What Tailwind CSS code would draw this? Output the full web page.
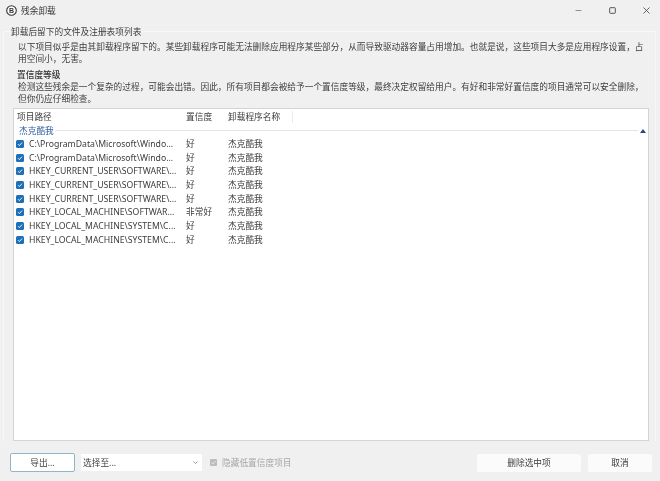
<!DOCTYPE html>
<html lang="zh-CN">
<head>
	<meta charset="UTF-8">
	<title>残余卸载</title>
	<script src="https://cdn.jsdelivr.net/npm/@tailwindcss/browser@4"></script>
</head>
<body class="w-[660px] h-[481px] overflow-hidden bg-[#f0f0f0] text-[#3c3c3c] text-[8.7px] leading-[12px] font-['Noto_Sans','Noto_Sans_CJK_SC',sans-serif] blur-[0.35px]">
	<!-- Title bar -->
	<header class="h-[20px] flex items-center pl-[6px] pr-[10px]">
		<svg width="11" height="11" viewBox="0 0 11 11" class="shrink-0">
			<circle cx="5.5" cy="5.5" r="4.8" fill="#fff" stroke="#333" stroke-width="1.1"/>
			<text x="5.5" y="8" text-anchor="middle" font-size="7" font-weight="700" font-family="Liberation Sans" fill="#333">B</text>
		</svg>
		<span class="ml-[4px] pt-[1px] text-[#333]">残余卸载</span>
		<div class="ml-auto flex items-center gap-[27px]">
			<svg width="7" height="7" viewBox="0 0 7 7"><path d="M0.5 3.5H6.5" stroke="#777" stroke-width="0.8"/></svg>
			<svg width="7" height="7" viewBox="0 0 7 7"><rect x="0.7" y="0.7" width="5.6" height="5.6" rx="0.6" fill="none" stroke="#444" stroke-width="0.9"/></svg>
			<svg width="7" height="7" viewBox="0 0 7 7"><path d="M0.5 0.5L6.5 6.5M6.5 0.5L0.5 6.5" stroke="#444" stroke-width="0.8"/></svg>
		</div>
	</header>

	<main class="mt-[11px] ml-[3px] mr-[4px] border-t border-l border-r border-[#f7f7f7]">
		<h2 class="-mt-[6px] mb-[3px] ml-[7px] w-fit bg-[#f0f0f0]">卸载后留下的文件及注册表项列表</h2>
		<div class="pl-[14px] whitespace-nowrap">
			<p>以下项目似乎是由其卸载程序留下的。某些卸载程序可能无法删除应用程序某些部分，从而导致驱动器容量占用增加。也就是说，这些项目大多是应用程序设置，占<br>用空间小，无害。</p>
			<h3 class="mt-[4px] font-medium text-[#333] -ml-[1px]">置信度等级</h3>
			<p>检测这些残余是一个复杂的过程，可能会出错。因此，所有项目都会被给予一个置信度等级，最终决定权留给用户。有好和非常好置信度的项目通常可以安全删除，<br>但你仍应仔细检查。</p>
		</div>

		<!-- Results list -->
		<section class="ml-[9px] mr-[6px] mt-[3px] h-[333px] bg-white border border-[#d4d4d4]">
			<div class="h-[15px] flex items-center">
				<span class="w-[172px] pl-[3px]">项目路径</span>
				<span class="w-[42px]">置信度</span>
				<span class="border-r border-[#ececec] pr-[12px]">卸载程序名称</span>
			</div>
			<div class="h-[13px] flex items-center pl-[5px]">
				<span class="text-[#2f5f9e] pr-[1px]">杰克酷我</span>
				<div class="flex-1 h-px bg-[#dfe6ee]"></div>
				<svg width="6" height="4" viewBox="0 0 6 4" class="mx-[2px]"><path d="M3 0L6 4H0Z" fill="#2c4a78"/></svg>
			</div>
			<ul>
				<li class="h-[13.7px] flex items-center"><span class="w-[8px] h-[8px] ml-[2px] mr-[5px] rounded-[1.5px] bg-[#1f6fb8] flex items-center justify-center"><svg width="8" height="8" viewBox="0 0 8 8"><path d="M2 4.2L3.4 5.6L6 2.6" fill="none" stroke="#fff" stroke-width="0.9"/></svg></span><span class="w-[157px]">C:\ProgramData\Microsoft\Windo...</span><span class="w-[42px]">好</span><span>杰克酷我</span></li>
				<li class="h-[13.7px] flex items-center"><span class="w-[8px] h-[8px] ml-[2px] mr-[5px] rounded-[1.5px] bg-[#1f6fb8] flex items-center justify-center"><svg width="8" height="8" viewBox="0 0 8 8"><path d="M2 4.2L3.4 5.6L6 2.6" fill="none" stroke="#fff" stroke-width="0.9"/></svg></span><span class="w-[157px]">C:\ProgramData\Microsoft\Windo...</span><span class="w-[42px]">好</span><span>杰克酷我</span></li>
				<li class="h-[13.7px] flex items-center"><span class="w-[8px] h-[8px] ml-[2px] mr-[5px] rounded-[1.5px] bg-[#1f6fb8] flex items-center justify-center"><svg width="8" height="8" viewBox="0 0 8 8"><path d="M2 4.2L3.4 5.6L6 2.6" fill="none" stroke="#fff" stroke-width="0.9"/></svg></span><span class="w-[157px]">HKEY_CURRENT_USER\SOFTWARE\...</span><span class="w-[42px]">好</span><span>杰克酷我</span></li>
				<li class="h-[13.7px] flex items-center"><span class="w-[8px] h-[8px] ml-[2px] mr-[5px] rounded-[1.5px] bg-[#1f6fb8] flex items-center justify-center"><svg width="8" height="8" viewBox="0 0 8 8"><path d="M2 4.2L3.4 5.6L6 2.6" fill="none" stroke="#fff" stroke-width="0.9"/></svg></span><span class="w-[157px]">HKEY_CURRENT_USER\SOFTWARE\...</span><span class="w-[42px]">好</span><span>杰克酷我</span></li>
				<li class="h-[13.7px] flex items-center"><span class="w-[8px] h-[8px] ml-[2px] mr-[5px] rounded-[1.5px] bg-[#1f6fb8] flex items-center justify-center"><svg width="8" height="8" viewBox="0 0 8 8"><path d="M2 4.2L3.4 5.6L6 2.6" fill="none" stroke="#fff" stroke-width="0.9"/></svg></span><span class="w-[157px]">HKEY_CURRENT_USER\SOFTWARE\...</span><span class="w-[42px]">好</span><span>杰克酷我</span></li>
				<li class="h-[13.7px] flex items-center"><span class="w-[8px] h-[8px] ml-[2px] mr-[5px] rounded-[1.5px] bg-[#1f6fb8] flex items-center justify-center"><svg width="8" height="8" viewBox="0 0 8 8"><path d="M2 4.2L3.4 5.6L6 2.6" fill="none" stroke="#fff" stroke-width="0.9"/></svg></span><span class="w-[157px]">HKEY_LOCAL_MACHINE\SOFTWAR...</span><span class="w-[42px]">非常好</span><span>杰克酷我</span></li>
				<li class="h-[13.7px] flex items-center"><span class="w-[8px] h-[8px] ml-[2px] mr-[5px] rounded-[1.5px] bg-[#1f6fb8] flex items-center justify-center"><svg width="8" height="8" viewBox="0 0 8 8"><path d="M2 4.2L3.4 5.6L6 2.6" fill="none" stroke="#fff" stroke-width="0.9"/></svg></span><span class="w-[157px]">HKEY_LOCAL_MACHINE\SYSTEM\C...</span><span class="w-[42px]">好</span><span>杰克酷我</span></li>
				<li class="h-[13.7px] flex items-center"><span class="w-[8px] h-[8px] ml-[2px] mr-[5px] rounded-[1.5px] bg-[#1f6fb8] flex items-center justify-center"><svg width="8" height="8" viewBox="0 0 8 8"><path d="M2 4.2L3.4 5.6L6 2.6" fill="none" stroke="#fff" stroke-width="0.9"/></svg></span><span class="w-[157px]">HKEY_LOCAL_MACHINE\SYSTEM\C...</span><span class="w-[42px]">好</span><span>杰克酷我</span></li>
			</ul>
		</section>
	</main>

	<!-- Bottom actions -->
	<footer class="flex items-center pl-[10px] pr-[8px] mt-[12px]">
		<button class="w-[65px] h-[19px] bg-white border border-[#8fb6c9] rounded-[2px]">导出...</button>
		<div class="w-[121px] h-[17px] ml-[6px] bg-white flex items-center justify-between px-[2px]">
			<span>选择至...</span>
			<svg width="5" height="3" viewBox="0 0 5 3" class="mr-[2px]"><path d="M0.5 0.5L2.5 2.5L4.5 0.5" fill="none" stroke="#777" stroke-width="0.7"/></svg>
		</div>
		<span class="w-[7px] h-[7px] ml-[8px] rounded-[1px] bg-[#bdbdbd] flex items-center justify-center"><svg width="7" height="7" viewBox="0 0 7 7"><path d="M1.5 3.7L3 5L5.5 2" fill="none" stroke="#eee" stroke-width="0.8"/></svg></span>
		<span class="ml-[5px] text-[#a8a8a8]">隐藏低置信度项目</span>
		<button class="ml-auto w-[104px] h-[18px] bg-[#fbfbfb] rounded-[2px]">删除选中项</button>
		<button class="ml-[7px] w-[64px] h-[18px] bg-[#fbfbfb] rounded-[2px]">取消</button>
	</footer>
</body>
</html>
